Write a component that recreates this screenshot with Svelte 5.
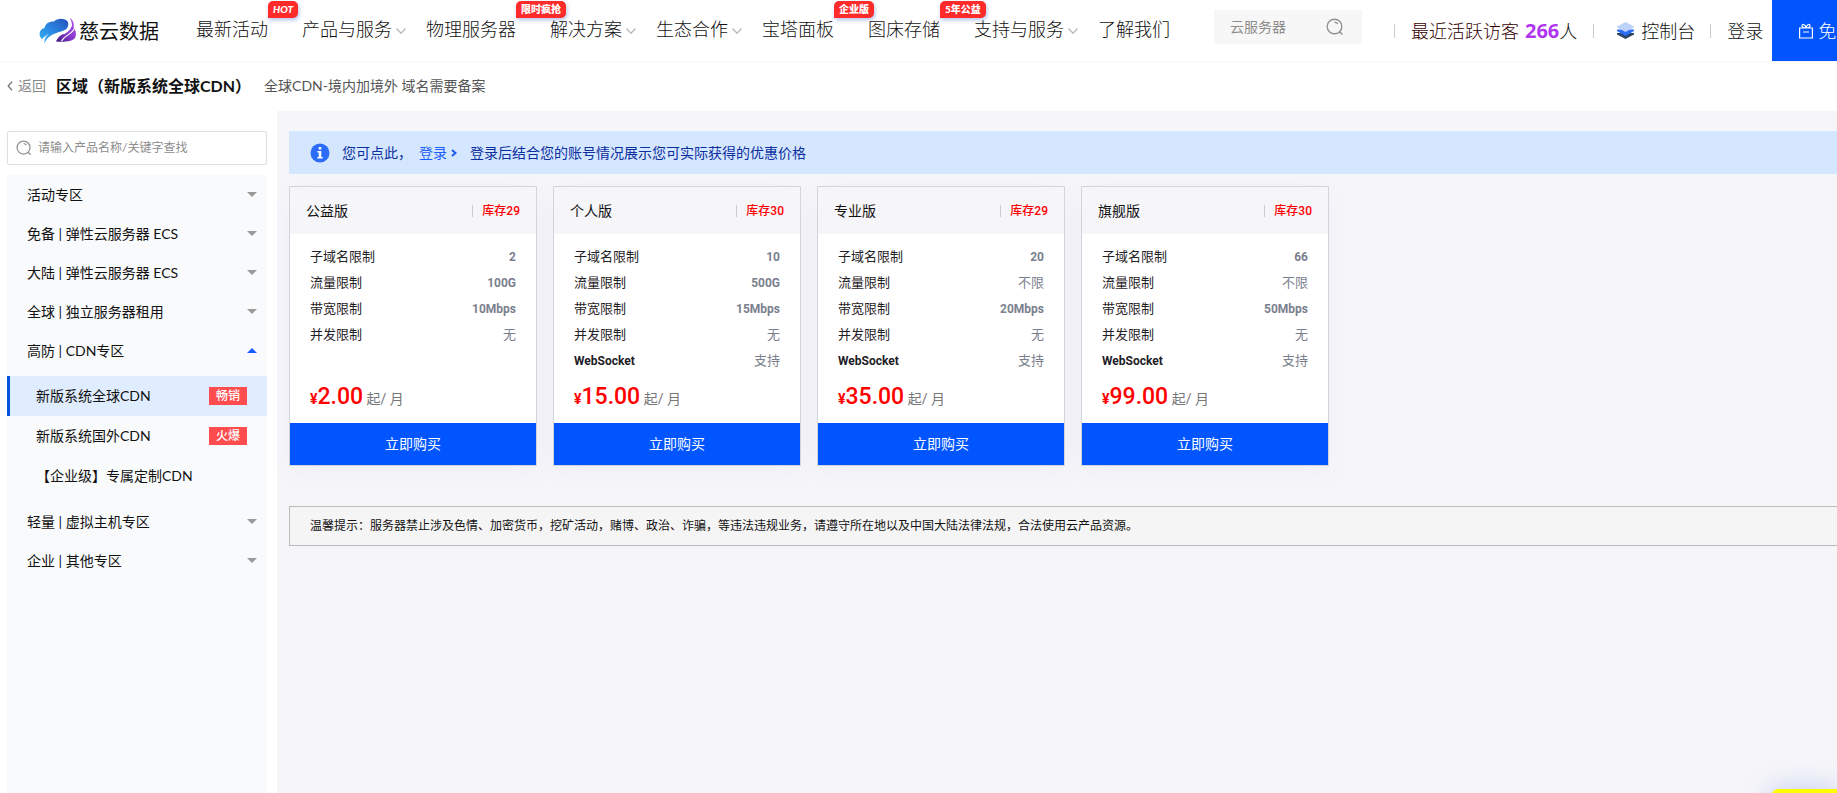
<script>

	let keyword = ''
	let filter = ''

	const nav = [
		{ name: '最新活动', badge: 'HOT' },
		{ name: '产品与服务', more: true },
		{ name: '物理服务器', badge: '限时疯抢' },
		{ name: '解决方案', more: true },
		{ name: '生态合作', more: true },
		{ name: '宝塔面板', badge: '企业版' },
		{ name: '图床存储', badge: '5年公益' },
		{ name: '支持与服务', more: true },
		{ name: '了解我们' },
	]

	let groups = [
		{ name: '活动专区' },
		{ name: '免备 | 弹性云服务器 ECS' },
		{ name: '大陆 | 弹性云服务器 ECS' },
		{ name: '全球 | 独立服务器租用' },
		{
			name: '高防 | CDN专区',
			open: true,
			items: [
				{ name: '新版系统全球CDN', tag: '畅销' },
				{ name: '新版系统国外CDN', tag: '火爆' },
				{ name: '【企业级】专属定制CDN' },
			]
		},
		{ name: '轻量 | 虚拟主机专区' },
		{ name: '企业 | 其他专区' },
	]

	let active = '新版系统全球CDN'

	const plan = (name, stock, price, domains, traffic, bandwidth, ws) => ({
		name, stock, price,
		specs: [
			['子域名限制', domains],
			['流量限制', traffic],
			['带宽限制', bandwidth],
			['并发限制', '无'],
			...(ws ? [['WebSocket', ws]] : []),
		]
	})

	const plans = [
		plan('公益版', 29, '2.00', '2', '100G', '10Mbps'),
		plan('个人版', 30, '15.00', '10', '500G', '15Mbps', '支持'),
		plan('专业版', 29, '35.00', '20', '不限', '20Mbps', '支持'),
		plan('旗舰版', 30, '99.00', '66', '不限', '50Mbps', '支持'),
	]

	const isLatin = (text) => /^\w+$/.test(text)

	const toggle = (group) => {
		group.open = !group.open
		groups = groups
	}

</script>

{#snippet magnifier()}
	<svg class="magnifier" viewBox="0 0 18 18" fill="none" stroke="currentColor" stroke-width="1.4" aria-hidden="true">
		<circle cx="8.5" cy="8.5" r="7.3" />
		<path d="M8.5 4.2a4.3 4.3 0 0 1 3.3 1.6M13.6 13.8l2.8 2.8" />
	</svg>
{/snippet}

<div class="page">
	<header>
		<a class="logo" href="/">
			<svg viewBox="0 0 38 26" aria-hidden="true">
				<defs>
					<linearGradient id="sky" x1="0" y1="1" x2="1" y2="0">
						<stop offset="0" stop-color="#35b4f2" />
						<stop offset=".5" stop-color="#2b86e2" />
						<stop offset="1" stop-color="#2450b8" />
					</linearGradient>
					<linearGradient id="violet" x1="0" y1="1" x2="1" y2="0">
						<stop offset="0" stop-color="#3f1a80" />
						<stop offset=".5" stop-color="#8a3bd0" />
						<stop offset="1" stop-color="#b649ee" />
					</linearGradient>
				</defs>
				<path fill="url(#sky)" d="M3 21C-1 18 0 11 5.500 10C6.500 5 11 3 15 3.500C18 0 26-.5 29 4C30 10 27 12 22 13.500C15 15.500 8 18 5.500 25.500C5 21 7 18 10 16C7 17 5 19 3 21Z" />
				<path fill="url(#violet)" d="M31 0C35 7 32 12 26 15C21 17.500 19 19 17 23.500C24 24 33 24 36 20C38 16 36.500 12 34.500 10C35.500 6 34 2 31 0Z" />
				<path fill="none" stroke="#fff" stroke-width="1.200" d="M35 11C33 16 26 17 22.500 23M32.500 6C32 11 29 13.500 24.500 16" />
			</svg>
			<strong>慈云数据</strong>
		</a>

		<nav>
			{#each nav as item}
				<div class="entry">
					<a href="#nav">{item.name}</a>
					{#if item.badge}
						<span class="badge" class:italic={item.badge == 'HOT'}>{item.badge}</span>
					{/if}
					<span class="slot">
						{#if item.more}
							<svg viewBox="0 0 10 6" fill="none" stroke="#b4b8c2" stroke-width="1.3" aria-hidden="true"><path d="M.5.5 5 5.200 9.500.5" /></svg>
						{/if}
					</span>
				</div>
			{/each}
		</nav>

		<form class="search" on:submit|preventDefault>
			<input aria-label="搜索" placeholder="云服务器" bind:value={keyword} />
			<button aria-label="搜索">{@render magnifier()}</button>
		</form>

		<div class="user">
			<span class="visitors">最近活跃访客 <b>266</b><span>人</span></span>
			<a class="console" href="#console">
				<svg viewBox="0 0 17 17" aria-hidden="true">
					<path fill="#2b4568" d="M0 11h17v1.500L8.500 17 0 12.500z" />
					<path fill="#2d6cf6" d="M0 7.500h17V9l-8.500 5L0 9z" />
					<path fill="#bcd2fb" d="M0 4.500 8.500 0 17 4.500v.8L8.500 10 0 5.300z" />
				</svg>
				控制台
			</a>
			<a class="login" href="#login">登录</a>
			<a class="signup" href="#signup">
				<svg viewBox="0 0 14 16" fill="none" stroke="#fff" stroke-width="1.200" aria-hidden="true">
					<path d="M.6 5h12.800v10H.6zM4 9h6M7 4.800C4.500 4.800 2.500 4 3 2.300S6.500 1.500 7 4.800C7.500 1.500 10.500.6 11 2.300S9.500 4.800 7 4.800z" />
				</svg>
				免
			</a>
		</div>
	</header>

	<div class="title">
		<a href="#back">
			<svg viewBox="0 0 6 10" fill="none" stroke="#777" stroke-width="1.300" aria-hidden="true"><path d="M5 .8 1.200 5 5 9.200" /></svg>
			返回
		</a>
		<h1>区域（新版系统全球CDN）</h1>
		<p>全球CDN-境内加境外 域名需要备案</p>
	</div>

	<main>
		<aside>
			<label class="filter">
				{@render magnifier()}
				<input aria-label="查找产品" placeholder="请输入产品名称/关键字查找" bind:value={filter} />
			</label>

			<div class="menu">
				{#each groups as group}
					<button class="group" class:open={group.open} on:click={() => toggle(group)}>
						{group.name}
						<i></i>
					</button>
					{#if group.open && group.items}
						<div class="items">
							{#each group.items as item}
								<button class:active={active == item.name} on:click={() => active = item.name}>
									{item.name}
									{#if item.tag}<span>{item.tag}</span>{/if}
								</button>
							{/each}
						</div>
					{/if}
				{/each}
			</div>
		</aside>

		<section class="content">
			<div class="alert">
				<svg class="info" viewBox="0 0 20 20" aria-hidden="true">
					<circle cx="10" cy="10" r="9.500" fill="#2b6df8" />
					<path fill="#fff" d="M8.700 4h2.600v2.500H8.700zM7.400 8h3.900v6h1.400v1.500H7.300V14h1.400V9.500H7.400z" />
				</svg>
				<span>您可点此，</span>
				<a href="#login">登录
					<svg viewBox="0 0 6 8" fill="none" stroke="#1a5cf0" stroke-width="2" aria-hidden="true"><path d="m1 1 3.500 3L1 7" /></svg>
				</a>
				<span>登录后结合您的账号情况展示您可实际获得的优惠价格</span>
			</div>

			<div class="plans">
				{#each plans as p}
					<article>
						<header class="head">
							<h2>{p.name}</h2>
							<span>库存{p.stock}</span>
						</header>
						<dl>
							{#each p.specs as [label, value]}
								<div>
									<dt class:latin={isLatin(label)}>{label}</dt>
									<dd class:latin={isLatin(value)}>{value}</dd>
								</div>
							{/each}
						</dl>
						<p class="price"><small>¥</small><b>{p.price}</b> <span>起/ 月</span></p>
						<button>立即购买</button>
					</article>
				{/each}
			</div>

			<p class="notice">温馨提示：服务器禁止涉及色情、加密货币，挖矿活动，赌博、政治、诈骗，等违法违规业务，请遵守所在地以及中国大陆法律法规，合法使用云产品资源。</p>
		</section>
	</main>

	<div class="float"></div>
</div>

<style>

	:global(*) {
		box-sizing: border-box;
	}

	.page {
		height: 100vh;
		display: flex;
		flex-direction: column;
		overflow: hidden;
		color: #111;
		background-color: #fff;
		font: 14px/20px Lato, "Noto Sans CJK SC", sans-serif;
	}

	a {
		color: inherit;
		text-decoration: none;
	}

	button, input {
		font: inherit;
		color: inherit;
		border: none;
		outline: none;
		padding: 0;
		background: none;
	}

	button {
		cursor: pointer;
	}

	svg {
		display: block;
		flex: none;
	}

	h1, h2, p, dl, dd {
		margin: 0;
	}

	.page > header {
		height: 62px;
		flex: none;
		display: flex;
		padding-left: 39px;
		border-bottom: 1px solid #f7f7f7;
		font-size: 18px;
		line-height: 58px;
		white-space: nowrap;
		font-weight: 300;
	}

	.logo {
		width: 157px;
		flex: none;
		display: flex;
		align-items: center;
		gap: 2px;
		font-size: 20px;
	}

	.logo svg {
		width: 38px;
		height: 26px;
	}

	nav {
		display: flex;
	}

	.entry {
		display: flex;
		position: relative;
	}

	.slot {
		width: 34px;
		padding-left: 4px;
		display: flex;
		align-items: center;
	}

	.slot svg {
		width: 10px;
		height: 6px;
	}

	.badge {
		position: absolute;
		left: calc(100% - 34px);
		top: 1px;
		padding: 0 5px;
		height: 17px;
		border-radius: 5px 5px 5px 0;
		background-color: #ff2a2a;
		box-shadow: 1px 2px 4px rgba(40, 80, 200, .35);
		color: #fff;
		font-size: 10px;
		font-weight: 900;
		line-height: 17px;
	}

	.italic {
		font-style: italic;
	}

	.search {
		width: 148px;
		height: 34px;
		flex: none;
		margin: 10px 32px 0 10px;
		padding: 0 18px 0 16px;
		display: flex;
		align-items: center;
		background-color: #f7f7f7;
		font-size: 14px;
		font-weight: 400;
	}

	.search input {
		width: 96px;
	}

	input::placeholder {
		color: #8c8c8c;
	}

	.magnifier {
		width: 18px;
		height: 18px;
		color: #8f9195;
	}

	.user {
		flex: 1;
		display: flex;
	}

	.user > span, .console, .login {
		display: flex;
		align-items: center;
	}

	.user > :not(.signup)::before {
		content: '';
		width: 1px;
		height: 14px;
		margin-right: 16px;
		background-color: #ccc;
	}

	.visitors {
		margin-right: 16px;
		color: #300;
	}

	.visitors b {
		margin-left: 6px;
		color: #b035f0;
		font: bold 20px/58px "Open Sans", sans-serif;
	}

	.visitors span {
		color: #111;
	}

	.console {
		margin-right: 15px;
	}

	.console svg {
		width: 17px;
		height: 17px;
		margin: 0 7px;
	}

	.login {
		margin-right: 9px;
	}

	.signup {
		flex: 1;
		display: flex;
		align-items: center;
		gap: 5px;
		padding-left: 27px;
		height: 61px;
		background-color: #0055ff;
		color: #fff;
	}

	.signup svg {
		width: 14px;
		height: 16px;
	}

	.title {
		height: 49px;
		flex: none;
		display: flex;
		align-items: center;
		padding: 0 0 2px 7px;
		color: #555;
	}

	.title a {
		display: flex;
		align-items: center;
		gap: 5px;
		color: #888;
	}

	.title svg {
		width: 6px;
		height: 10px;
	}

	h1 {
		margin: 0 13px 0 10px;
		color: #111;
		font-size: 16px;
	}

	main {
		flex: 1;
		display: flex;
		min-height: 0;
	}

	aside {
		width: 260px;
		flex: none;
		margin: 20px 10px 0 7px;
		display: flex;
		flex-direction: column;
		gap: 10px;
	}

	.filter {
		height: 34px;
		padding-left: 8px;
		display: flex;
		align-items: center;
		gap: 6px;
		border: 1px solid #dcdfe6;
		border-radius: 2px;
		font-size: 12px;
	}

	.filter .magnifier {
		width: 16px;
		height: 16px;
	}

	.filter input {
		flex: 1;
	}

	.menu {
		flex: 1;
		background-color: #f9fafc;
	}

	.menu button {
		width: 100%;
		display: flex;
		align-items: center;
		justify-content: space-between;
	}

	.group {
		height: 39px;
		padding: 0 10px 0 20px;
	}

	.group i {
		border: 5px solid transparent;
		border-top-color: #999;
		border-bottom: none;
	}

	.group.open i {
		border-top: none;
		border-bottom: 5px solid #1a5cff;
	}

	.items {
		padding: 6px 0;
	}

	.items button {
		height: 40px;
		padding: 0 20px 0 26px;
		border-left: 3px solid transparent;
	}

	.items .active {
		border-left-color: #0052d9;
		background-color: #e0edff;
	}

	.items span {
		padding: 0 7px;
		background-color: #ff4d4f;
		color: #fff;
		font-size: 12px;
		font-weight: 500;
		line-height: 18px;
	}

	.content {
		flex: 1;
		min-width: 0;
		padding: 20px 0 0 12px;
		background-color: #f6f6f9;
	}

	.alert {
		height: 43px;
		padding-left: 21px;
		display: flex;
		align-items: center;
		background-color: #d5e6ff;
		color: #0b2fa0;
	}

	.info {
		width: 20px;
		height: 20px;
		margin-right: 12px;
	}

	.alert a {
		display: flex;
		align-items: center;
		gap: 4px;
		margin: 0 13px 0 7px;
		color: #1a5cff;
	}

	.alert a svg {
		width: 6px;
		height: 8px;
	}

	.plans {
		margin: 12px 0 40px;
		display: flex;
		gap: 16px;
	}

	article {
		width: 248px;
		display: flex;
		flex-direction: column;
		border: 1px solid #d3d5da;
		background-color: #fff;
		box-shadow: 0 8px 24px rgba(80, 60, 200, .04);
		font-family: Roboto, "Noto Sans CJK SC", sans-serif;
	}

	.head {
		height: 47px;
		padding: 0 16px;
		display: flex;
		align-items: center;
		justify-content: space-between;
		background-color: #f6f6f9;
	}

	h2 {
		font-size: 14px;
		font-weight: 400;
	}

	.head span {
		display: flex;
		align-items: center;
		color: #f00;
		font-size: 12px;
		font-weight: 500;
	}

	.head span::before {
		content: '';
		width: 1px;
		height: 12px;
		margin-right: 9px;
		background-color: #ccc;
	}

	dl {
		flex: 1;
		min-height: 153px;
		padding: 10px 20px 0;
		font-size: 13px;
		line-height: 26px;
	}

	dl div {
		display: flex;
		justify-content: space-between;
	}

	dt {
		color: #1f2126;
	}

	dd {
		color: #7b7f8e;
	}

	.latin {
		font-size: 12px;
		font-weight: 700;
	}

	.price {
		padding: 0 20px;
		height: 36px;
		color: #f00;
		line-height: 20px;
	}

	.price small {
		font-size: 14px;
		font-weight: 700;
	}

	.price b {
		font-size: 23px;
		font-weight: 500;
	}

	.price span {
		color: #777;
	}

	article button {
		height: 42px;
		background-color: #0055ff;
		color: #fff;
	}

	.notice {
		height: 40px;
		padding-left: 20px;
		border: 1px solid #bbb;
		border-right: none;
		background-color: #f5f5f5;
		font-size: 12px;
		line-height: 38px;
		white-space: nowrap;
	}

	/* contact panel docked in the corner, only its top edge peeks out */
	.float {
		position: fixed;
		right: 0;
		bottom: -62px;
		width: 66px;
		height: 66px;
		border-radius: 8px 0 0 8px;
		background-color: #ff0;
		box-shadow: 0 0 28px rgba(60, 100, 230, .3);
	}

</style>
